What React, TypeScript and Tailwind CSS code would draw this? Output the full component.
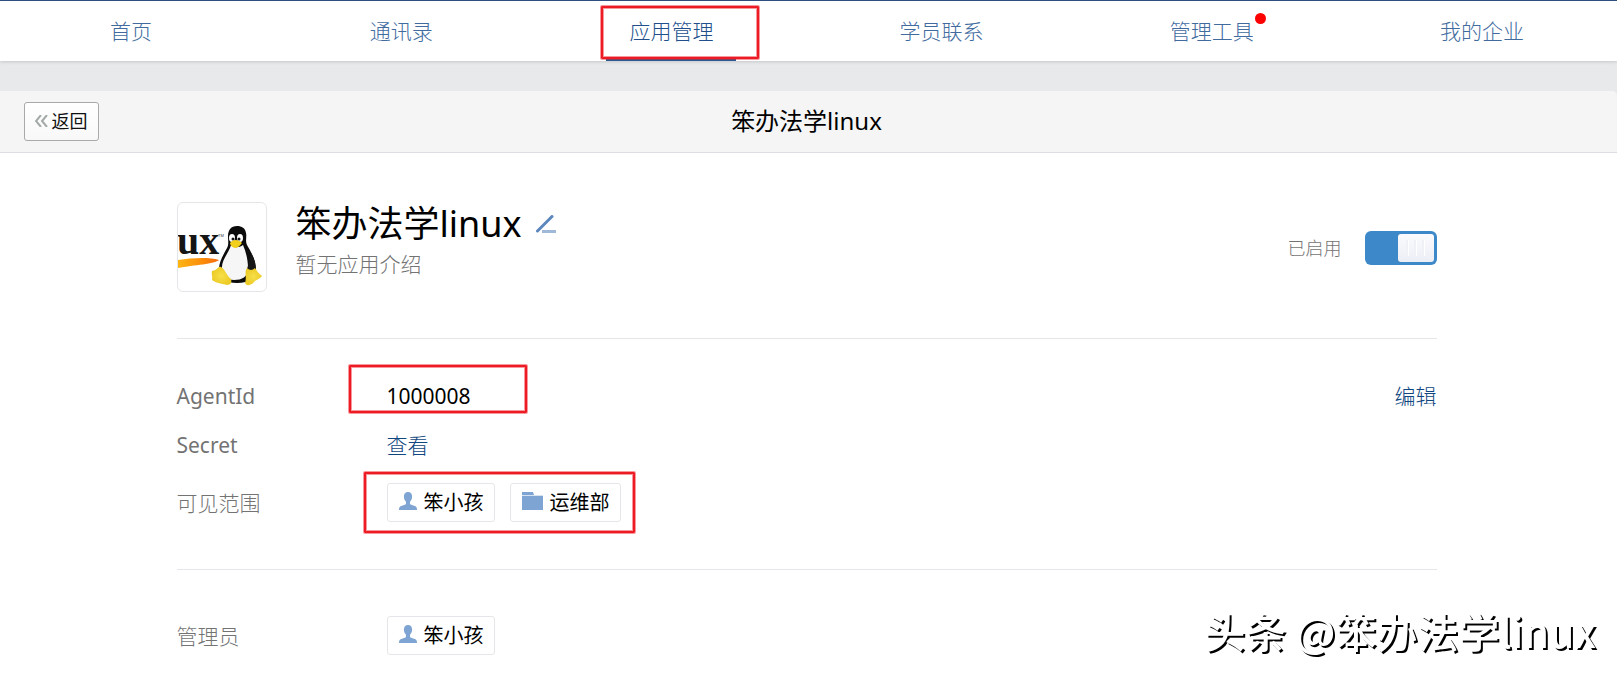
import { ReactNode, useState } from 'react'

const tabs = [
  { name: '首页' },
  { name: '通讯录' },
  { name: '应用管理', active: true },
  { name: '学员联系' },
  { name: '管理工具', dot: true },
  { name: '我的企业' },
]

function Mark({ className }: { className: string }) {
  return (
    <span
      className={`
        absolute
        pointer-events-none
        rounded-[1px]
        border-2
        border-[#ed1c24]
        shadow-[0_0_0_1px_rgba(237,28,36,0.45),inset_0_0_0_1px_rgba(237,28,36,0.45)]
        ${className}
      `}
    />
  )
}

function UserIcon() {
  return (
    <svg width="18" height="18" viewBox="0 0 18 18" fill="#7ea4d3">
      <path d="M9 0C6.300 0 4.900 1.900 4.900 4.500c0 2.300.9 4.100 2.100 5.200v1.500c0 .8-.4 1.200-1.200 1.500L1.600 14.300C.5 14.800 0 15.600 0 18h18c0-2.400-.5-3.200-1.600-3.700l-4.200-1.600c-.8-.3-1.200-.7-1.200-1.500V9.700c1.200-1.100 2.100-2.900 2.100-5.200C13.100 1.900 11.700 0 9 0z" />
    </svg>
  )
}

function FolderIcon() {
  return (
    <svg width="21" height="18" viewBox="0 0 21 18">
      <path d="M0 0h11l1 3h9v2H0z" fill="#7ea4d3" />
      <path d="M0 3h21v1H0z" fill="#d5e2f2" />
      <path d="M0 4h21v14H0z" fill="#7ea4d3" />
    </svg>
  )
}

function Chip({ icon, children }: { icon: ReactNode; children: ReactNode }) {
  return (
    <span className="flex h-[39px] items-start gap-[7px] rounded-[3px] border border-[#e4e6e9] pr-[10px] pl-[11px] text-[20px] text-black">
      <span className="pt-2">{icon}</span>
      <span className="leading-[37px]">{children}</span>
    </span>
  )
}

function TuxLogo() {
  return (
    <svg width="88" height="88" viewBox="0 0 88 88">
      <defs>
        <linearGradient id="swoosh" x1="0" x2="1">
          <stop offset="0" stopColor="#fdb515" />
          <stop offset="0.6" stopColor="#fb8c0a" />
          <stop offset="1" stopColor="#f26a12" />
        </linearGradient>
        <radialGradient id="foot">
          <stop offset="0" stopColor="#f7e04a" />
          <stop offset="1" stopColor="#eccb26" />
        </radialGradient>
      </defs>
      <text
        x="-1"
        y="51"
        fontFamily="Liberation Serif, serif"
        fontWeight="bold"
        fontSize="40"
        fill="#151515"
      >
        ux
      </text>
      <text x="40" y="34" fontFamily="Liberation Sans, sans-serif" fontSize="4" fill="#333">
        TM
      </text>
      <path d="M0 57C14 55 31 54 41 57C37 61 16 62 0 65z" fill="url(#swoosh)" />
      <path
        d="M59 23c-6 0-9 4-9 10 0 5 1 8-1 12-3 6-8 13-8 21 0 9 6 14 18 14 13 0 19-5 19-14 0-9-5-17-9-24-2-4 0-8-1-12-1-5-4-7-9-7z"
        fill="#0c0c0c"
      />
      <path
        d="M53 42c-2 8-10 15-9 24 1 8 5 11 12 11 8 0 14-3 14-12 0-8-2-16-5-23-4 3-9 3-12 0z"
        fill="#f6f6f6"
      />
      <ellipse cx="54" cy="35" rx="3" ry="4" fill="#fff" />
      <ellipse cx="62" cy="35" rx="3" ry="4" fill="#fff" />
      <circle cx="55" cy="36" r="1.500" fill="#111" />
      <circle cx="61" cy="36" r="1.500" fill="#111" />
      <path d="M52 40c3-4 8-4 12 0-2 3-5 5-7 5s-5-3-5-5z" fill="#f2cf1c" />
      <path d="M73 50c3 5 5 11 4 15-2 3-6 3-8 1 2-6 3-11 4-16z" fill="#171717" />
      <path
        d="M43 64c-3-1-3 3-9 4-1 3 1 6 0 9 4 3 11 4 15 5 4 0 5-3 4-6-4-3-6-10-10-12z"
        fill="url(#foot)"
      />
      <path
        d="M69 65c-3 4 0 9-2 15 2 4 7 2 10-2 3-2 6-3 7-5-3-2-5-5-7-8-3 3-6 2-8 0z"
        fill="url(#foot)"
      />
    </svg>
  )
}

export default function App() {
  const [enabled, setEnabled] = useState(true)

  return (
    <div
      className="
      min-h-screen
      overflow-hidden
      bg-white
      text-[21px]
      leading-[30px]
      text-[#737373]
      font-['Noto_Sans','Noto_Sans_CJK_SC',sans-serif]
    "
    >
      <div className="bg-[#e8e9eb] pb-[30px]">
        <nav className="border-t border-[#2f4d7f] bg-white font-light shadow-[0_1px_3px_rgba(0,0,0,0.15)]">
          <div className="-ml-1 grid h-[60px] grid-cols-6 justify-items-center">
            {tabs.map((tab) => (
              <a
                key={tab.name}
                href="#"
                className={`relative flex w-[130px] items-center justify-center border-b-2 pt-px ${
                  tab.active
                    ? 'border-[#2e5a94] text-[#204f8c]'
                    : 'border-transparent text-[#416b9f]'
                }`}
              >
                <span className="relative">
                  {tab.name}
                  {tab.dot && (
                    <span className="absolute -top-[3px] -right-3 size-[11px] rounded-full bg-[#ff0000]" />
                  )}
                </span>
                {tab.active && <Mark className="top-[5px] -left-[5px] h-[53px] w-[158px]" />}
              </a>
            ))}
          </div>
        </nav>
      </div>

      <div className="-mt-px bg-[#e8e9eb] pt-px">
        <header className="-ml-1 grid h-[62px] grid-cols-[1fr_auto_1fr] items-center rounded-t-[5px] border-b border-[#dcdee1] bg-[#f5f5f5] px-7">
          <button
            type="button"
            className="flex h-[39px] w-[75px] items-center justify-center gap-1 rounded-[3px] border border-[#a9a9a9] bg-linear-to-b from-white to-[#f8f8f8] pr-px pb-[2px] text-[18px] text-[#111]"
          >
            <svg width="13" height="12" viewBox="0 0 13 12" fill="none" stroke="#a3a8a8" strokeWidth="2">
              <path d="M6 0L1 6l5 6M12 0L7 6l5 6" />
            </svg>
            返回
          </button>
          <h1 className="pb-px text-[24px] font-normal text-black">笨办法学linux</h1>
        </header>
      </div>

      <main className="-ml-1">
        <div className="mx-auto max-w-[1260px]">
          <section className="flex items-start border-b border-[#e4e6e9] pt-[49px] pb-[46px]">
            <div className="size-[90px] shrink-0 overflow-hidden rounded-[6px] border border-[#e4e6e9]">
              <TuxLogo />
            </div>
            <div className="ml-[29px] grow">
              <h2 className="flex items-center gap-[14px] text-[36px] leading-[44px] font-normal text-black">
                笨办法学linux
                <button type="button" aria-label="编辑名称">
                  <svg width="20" height="18" viewBox="0 0 20 18">
                    <path d="M1.500 16L16 1.500" stroke="#5b87bd" strokeWidth="3" strokeLinecap="round" />
                    <path d="M6 16.500h14" stroke="#a0b9d9" strokeWidth="3" />
                  </svg>
                </button>
              </h2>
              <p className="leading-[36px] font-light">暂无应用介绍</p>
            </div>
            <label className="flex items-center gap-[23px] pt-[29px] text-[18px] font-light">
              已启用
              <input
                type="checkbox"
                checked={enabled}
                onChange={(e) => setEnabled(e.target.checked)}
                className="sr-only"
              />
              <span
                className={`flex h-[34px] w-[72px] items-center rounded-[6px] px-[3px] ${
                  enabled ? 'justify-end bg-[#3d88c9]' : 'bg-[#b5b5b5]'
                }`}
              >
                <span className="flex h-7 w-9 items-center justify-center gap-[5px] rounded-[3px] bg-linear-to-b from-[#fbfbfd] to-[#eceef6]">
                  <span className="h-4 w-[3px] border-r border-white bg-[#f0f1f7]" />
                  <span className="h-4 w-[3px] border-r border-white bg-[#f0f1f7]" />
                  <span className="h-4 w-[3px] border-r border-white bg-[#f0f1f7]" />
                </span>
              </span>
            </label>
          </section>

          <section className="relative border-b border-[#e4e6e9] pt-[42px] pb-[47px]">
            <a href="#" className="absolute top-[42px] right-0 font-light text-[#0f4680]">
              编辑
            </a>
            <dl className="grid grid-cols-[210px_1fr] items-center gap-y-[19px]">
              <dt>AgentId</dt>
              <dd className="relative text-black">
                1000008
                <Mark className="-top-4 -left-[38px] h-[48px] w-[178px]" />
              </dd>
              <dt>Secret</dt>
              <dd>
                <a href="#" className="font-light text-[#0f4680]">
                  查看
                </a>
              </dd>
              <dt className="mt-1 font-light">可见范围</dt>
              <dd className="relative mt-1 flex gap-[15px]">
                <Chip icon={<UserIcon />}>笨小孩</Chip>
                <Chip icon={<FolderIcon />}>运维部</Chip>
                <Mark className="-top-[11px] -left-[23px] h-[61px] w-[271px]" />
              </dd>
            </dl>
          </section>

          <section className="pt-[46px]">
            <dl className="grid grid-cols-[210px_1fr] items-center">
              <dt className="font-light">管理员</dt>
              <dd className="flex">
                <Chip icon={<UserIcon />}>笨小孩</Chip>
              </dd>
            </dl>
          </section>
        </div>
      </main>

      <div className="pointer-events-none fixed right-[21px] bottom-[17px] font-['Noto_Sans_CJK_SC',sans-serif] text-[41px] leading-[56px] font-medium text-white [text-shadow:2px_2px_0_#000]">
        头条 @笨办法学linux
      </div>
    </div>
  )
}
